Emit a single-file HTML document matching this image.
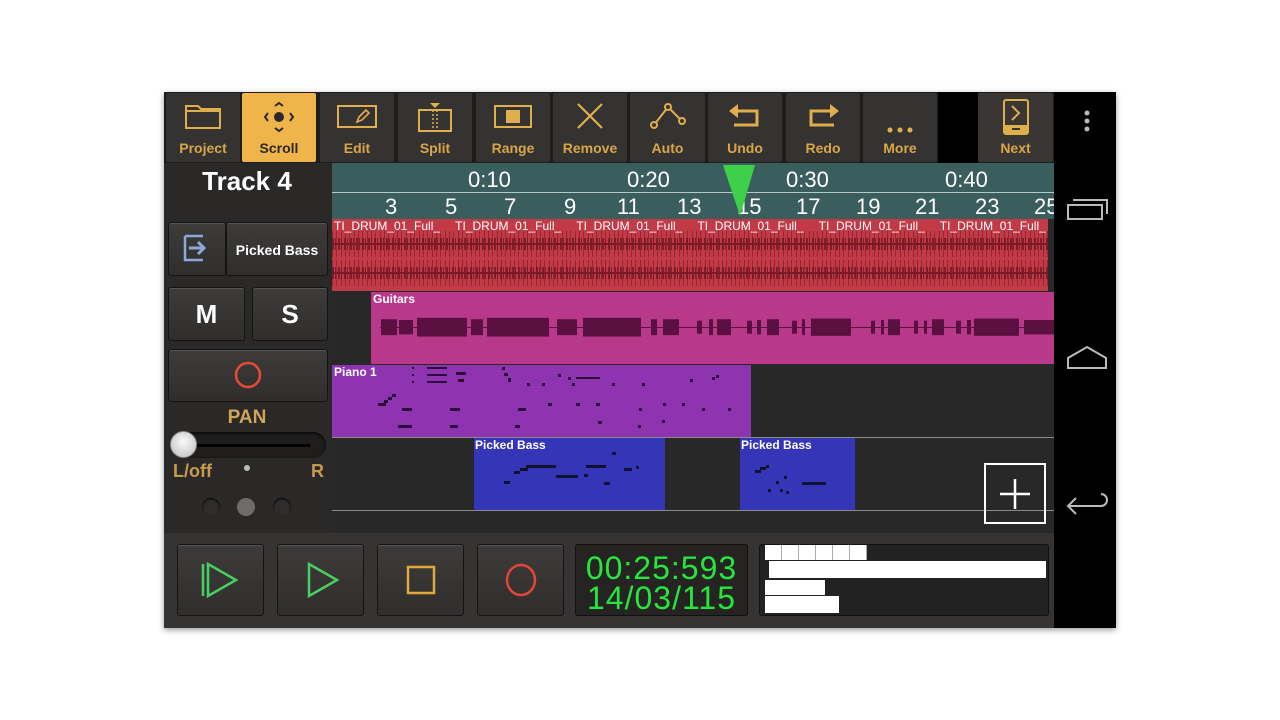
<!DOCTYPE html>
<html><head><meta charset="utf-8"><style>
*{margin:0;padding:0;box-sizing:border-box}
body{width:1280px;height:720px;background:#fff;position:relative;overflow:hidden;font-family:"Liberation Sans",sans-serif}
.a{position:absolute}
.tb{position:absolute;top:93px;height:69px;background:#353331;border-radius:2px;color:#d8a649;font-weight:bold;font-size:14px;text-align:center}
.tb span{position:absolute;left:0;right:0;bottom:6px}
.tb svg{position:absolute;left:50%;top:8px;transform:translateX(-50%)}
.btn{position:absolute;background:linear-gradient(#3e3c3a,#2f2e2c);border:1px solid #151414;border-radius:3px;box-shadow:inset 0 1px 0 #555}
.num{position:absolute;color:#fff;font-size:22px;top:194px}
.tm{position:absolute;color:#fff;font-size:22px;top:167px}
.lab{position:absolute;color:#fff;font-size:12px;font-weight:bold}
.wv{position:absolute;left:332px;width:716px;height:26px;background:repeating-linear-gradient(90deg,#6e1620 0 1px,transparent 1px 4px,#7a1a24 4px 5px,transparent 5px 9px,#6e1620 9px 10px,transparent 10px 13px);opacity:.55}
.wv2{position:absolute;left:332px;width:716px;height:12px;background:repeating-linear-gradient(90deg,#6e1620 0 2px,transparent 2px 3px,#6e1620 3px 4px,transparent 4px 6px);opacity:.8}
</style></head><body>
<div class="a" style="left:164px;top:92px;width:952px;height:536px;background:#1e1d1c;box-shadow:0 2px 6px rgba(0,0,0,.4)"></div>
<div class="a" style="left:1054px;top:92px;width:62px;height:536px;background:#000"></div>
<div class="a" style="left:938px;top:92px;width:40px;height:71px;background:#000"></div>
<div class="tb" style="left:166px;width:74px"><svg width="40" height="30"><path d="M3 5h12l3 3h19v19H3z" fill="none" stroke="#e0ae4d" stroke-width="2"/><path d="M3 10h34" stroke="#e0ae4d" stroke-width="2"/></svg><span>Project</span></div>
<div class="tb" style="left:242px;width:74px;background:#efb54a;color:#2b2a28"><svg width="40" height="32"><circle cx="20" cy="16" r="5" fill="#2b2a28"/><path d="M16 5l4-3 4 3M16 27l4 3 4-3M9 12l-3 4 3 4M31 12l3 4-3 4" fill="none" stroke="#2b2a28" stroke-width="2"/></svg><span>Scroll</span></div>
<div class="tb" style="left:320px;width:74px"><svg width="44" height="30"><rect x="3" y="5" width="38" height="21" fill="none" stroke="#e0ae4d" stroke-width="2"/><path d="M22 21l2-5 7-7 3 3-7 7z" fill="none" stroke="#e0ae4d" stroke-width="1.6"/></svg><span>Edit</span></div>
<div class="tb" style="left:398px;width:74px"><svg width="44" height="32"><path d="M17 2h10l-5 5z" fill="#e0ae4d"/><rect x="6" y="9" width="32" height="21" fill="none" stroke="#e0ae4d" stroke-width="2"/><path d="M20 9v21M24 9v21" stroke="#e0ae4d" stroke-width="1.5" stroke-dasharray="2 2"/></svg><span>Split</span></div>
<div class="tb" style="left:476px;width:74px"><svg width="44" height="30"><rect x="4" y="5" width="36" height="21" fill="none" stroke="#e0ae4d" stroke-width="2"/><rect x="15" y="9" width="14" height="13" fill="#e0ae4d"/></svg><span>Range</span></div>
<div class="tb" style="left:553px;width:74px"><svg width="40" height="30"><path d="M8 3l24 24M32 3L8 27" stroke="#e0ae4d" stroke-width="2.2"/></svg><span>Remove</span></div>
<div class="tb" style="left:630px;width:75px"><svg width="40" height="30"><path d="M6 24L20 6l14 14" fill="none" stroke="#e0ae4d" stroke-width="2"/><circle cx="6" cy="24" r="3" fill="#353331" stroke="#e0ae4d" stroke-width="2"/><circle cx="20" cy="6" r="3" fill="#353331" stroke="#e0ae4d" stroke-width="2"/><circle cx="34" cy="20" r="3" fill="#353331" stroke="#e0ae4d" stroke-width="2"/></svg><span>Auto</span></div>
<div class="tb" style="left:708px;width:74px"><svg width="40" height="30"><path d="M4 10l9-7v14z" fill="#e0ae4d"/><path d="M12 10h20v14H9" fill="none" stroke="#e0ae4d" stroke-width="3"/></svg><span>Undo</span></div>
<div class="tb" style="left:786px;width:74px"><svg width="40" height="30"><path d="M36 10l-9-7v14z" fill="#e0ae4d"/><path d="M28 10H8v14h23" fill="none" stroke="#e0ae4d" stroke-width="3"/></svg><span>Redo</span></div>
<div class="tb" style="left:863px;width:74px"><svg width="40" height="36"><circle cx="10" cy="29" r="2.5" fill="#e0ae4d"/><circle cx="20" cy="29" r="2.5" fill="#e0ae4d"/><circle cx="30" cy="29" r="2.5" fill="#e0ae4d"/></svg><span>More</span></div>
<div class="tb" style="left:978px;width:75px;background:#3a3633"><svg width="40" height="38" style="top:5px"><rect x="8" y="2" width="24" height="34" rx="2" fill="none" stroke="#e0ae4d" stroke-width="2"/><rect x="8" y="27" width="24" height="9" fill="#e0ae4d"/><path d="M16 8l7 7-7 7" fill="none" stroke="#e0ae4d" stroke-width="2"/><path d="M16 31h8" stroke="#353331" stroke-width="2"/></svg><span>Next</span></div>
<svg class="a" style="left:1054px;top:92px" width="62" height="536"><circle cx="33" cy="21" r="2.5" fill="#bbb"/><circle cx="33" cy="29" r="2.5" fill="#bbb"/><circle cx="33" cy="37" r="2.5" fill="#bbb"/><rect x="14" y="113" width="34" height="14" fill="none" stroke="#bbb" stroke-width="2"/><path d="M19 108h34v14" fill="none" stroke="#bbb" stroke-width="2"/><path d="M14 276v-10l19-11 19 11v10z" fill="none" stroke="#bbb" stroke-width="2"/><path d="M22 406l-8 8 8 8M14 414h33a6 6 0 0 0 0-12" fill="none" stroke="#bbb" stroke-width="2"/></svg>
<div class="a" style="left:164px;top:163px;width:168px;height:370px;background:#2a2928"></div>
<div class="a" style="left:164px;top:166px;width:166px;text-align:center;color:#fff;font-size:26px;font-weight:bold">Track 4</div>
<div class="btn" style="left:168px;top:222px;width:58px;height:54px"><svg width="56" height="52"><path d="M16 13v24h18M16 13h18" fill="none" stroke="#8da9d8" stroke-width="2.5"/><path d="M20 25h14M29 19l6 6-6 6" fill="none" stroke="#8da9d8" stroke-width="3"/></svg></div>
<div class="btn" style="left:226px;top:222px;width:102px;height:54px;color:#fff;font-weight:bold;font-size:14px;text-align:center;line-height:54px">Picked Bass</div>
<div class="btn" style="left:168px;top:287px;width:77px;height:54px;color:#fff;font-weight:bold;font-size:26px;text-align:center;line-height:52px">M</div>
<div class="btn" style="left:252px;top:287px;width:76px;height:54px;color:#fff;font-weight:bold;font-size:26px;text-align:center;line-height:52px">S</div>
<div class="btn" style="left:168px;top:349px;width:160px;height:53px"><svg width="158" height="51"><circle cx="79" cy="25" r="12" fill="none" stroke="#e84b34" stroke-width="2.5"/></svg></div>
<div class="a" style="left:164px;top:407px;width:166px;text-align:center;color:#d0a55a;font-size:19px;font-weight:bold">PAN</div>
<div class="a" style="left:170px;top:432px;width:156px;height:26px;border-radius:13px;background:#1f1e1d;box-shadow:inset 0 1px 3px #000"></div>
<div class="a" style="left:184px;top:444px;width:126px;height:3px;background:#000"></div>
<div class="a" style="left:170px;top:431px;width:27px;height:27px;border-radius:50%;background:radial-gradient(circle at 50% 40%,#fafafa,#bbb);border:1px solid #888"></div>
<div class="a" style="left:173px;top:461px;color:#c69a4f;font-size:18px;font-weight:bold">L/off</div>
<div class="a" style="left:311px;top:461px;color:#c69a4f;font-size:18px;font-weight:bold">R</div>
<div class="a" style="left:244px;top:465px;width:6px;height:6px;border-radius:50%;background:#bbb"></div>
<div class="a" style="left:202px;top:498px;width:18px;height:18px;border-radius:50%;background:#2e2d2c;box-shadow:inset 0 1px 2px #000"></div>
<div class="a" style="left:237px;top:498px;width:18px;height:18px;border-radius:50%;background:#6d6c6b"></div>
<div class="a" style="left:273px;top:498px;width:18px;height:18px;border-radius:50%;background:#2e2d2c;box-shadow:inset 0 1px 2px #000"></div>
<div class="a" style="left:332px;top:163px;width:722px;height:370px;background:#292828"></div>
<div class="a" style="left:332px;top:163px;width:722px;height:56px;background:#3a5e5d"></div>
<div class="a" style="left:332px;top:192px;width:722px;height:1px;background:#b8c8c8"></div>
<div class="tm" style="left:468px">0:10</div><div class="tm" style="left:627px">0:20</div><div class="tm" style="left:786px">0:30</div><div class="tm" style="left:945px">0:40</div>
<div class="num" style="left:385px">3</div><div class="num" style="left:445px">5</div><div class="num" style="left:504px">7</div><div class="num" style="left:564px">9</div><div class="num" style="left:617px">11</div><div class="num" style="left:677px">13</div><div class="num" style="left:737px">15</div><div class="num" style="left:796px">17</div><div class="num" style="left:856px">19</div><div class="num" style="left:915px">21</div><div class="num" style="left:975px">23</div><div class="num" style="left:1034px;width:20px;overflow:hidden">25</div>
<div class="a" style="left:332px;top:219px;width:716px;height:72px;background:#c23a48"></div>
<div class="wv" style="top:231px"></div><div class="wv2" style="top:238px"></div>
<div class="wv" style="top:260px"></div><div class="wv2" style="top:267px"></div>
<div class="a" style="left:332px;top:243px;width:716px;height:2px;background:#7a1a24"></div>
<div class="a" style="left:332px;top:272px;width:716px;height:2px;background:#7a1a24"></div>
<div class="a" style="left:334px;top:219px;width:714px;overflow:hidden;color:#fff;font-size:12px;white-space:nowrap;word-spacing:12px">TI_DRUM_01_Full_ TI_DRUM_01_Full_ TI_DRUM_01_Full_ TI_DRUM_01_Full_ TI_DRUM_01_Full_ TI_DRUM_01_Full_</div>
<div class="a" style="left:371px;top:292px;width:683px;height:72px;background:#b8388a"></div>
<div class="a" style="left:380px;top:327px;width:674px;height:1px;background:#5a1040"></div>
<svg class="a" style="left:371px;top:292px" width="683" height="72"><g fill="#5a1040" transform="translate(0,10) scale(1,0.72)">
<rect x="10" y="24" width="16" height="22"/><rect x="28" y="25" width="14" height="20"/><rect x="46" y="22" width="50" height="26"/><rect x="100" y="24" width="12" height="22"/><rect x="116" y="22" width="62" height="26"/><rect x="186" y="24" width="20" height="22"/><rect x="212" y="22" width="58" height="26"/><rect x="280" y="24" width="6" height="22"/><rect x="292" y="24" width="16" height="22"/><rect x="326" y="26" width="5" height="18"/><rect x="338" y="24" width="4" height="22"/><rect x="346" y="24" width="14" height="22"/><rect x="376" y="26" width="5" height="18"/><rect x="386" y="25" width="4" height="20"/><rect x="396" y="24" width="12" height="22"/><rect x="421" y="26" width="5" height="18"/><rect x="431" y="24" width="3" height="22"/><rect x="440" y="23" width="40" height="24"/><rect x="500" y="26" width="4" height="18"/><rect x="510" y="25" width="3" height="20"/><rect x="517" y="24" width="12" height="22"/><rect x="543" y="26" width="4" height="18"/><rect x="553" y="26" width="3" height="18"/><rect x="561" y="24" width="12" height="22"/><rect x="585" y="26" width="5" height="18"/><rect x="596" y="25" width="4" height="20"/><rect x="603" y="23" width="45" height="24"/><rect x="653" y="25" width="30" height="20"/></g></svg>
<div class="lab" style="left:373px;top:292px">Guitars</div>
<div class="a" style="left:332px;top:365px;width:419px;height:72px;background:#8e34b0"></div>
<svg class="a" style="left:332px;top:365px" width="419" height="72"><g fill="#2a0b3a">
<rect x="46" y="38" width="8" height="3"/><rect x="52" y="35" width="4" height="3"/><rect x="56" y="32" width="4" height="3"/><rect x="60" y="29" width="4" height="3"/><rect x="70" y="43" width="10" height="3"/><rect x="118" y="43" width="10" height="3"/><rect x="66" y="60" width="14" height="3"/><rect x="118" y="60" width="8" height="3"/><rect x="186" y="43" width="8" height="3"/><rect x="183" y="60" width="5" height="3"/><rect x="216" y="38" width="4" height="3"/><rect x="244" y="38" width="4" height="3"/><rect x="264" y="38" width="4" height="3"/><rect x="266" y="56" width="4" height="3"/><rect x="307" y="43" width="3" height="3"/><rect x="331" y="38" width="3" height="3"/><rect x="306" y="60" width="3" height="3"/><rect x="330" y="55" width="3" height="3"/><rect x="350" y="38" width="3" height="3"/><rect x="370" y="43" width="3" height="3"/><rect x="396" y="43" width="3" height="3"/><rect x="80" y="2" width="2" height="2"/><rect x="95" y="2" width="20" height="2"/><rect x="80" y="9" width="2" height="2"/><rect x="95" y="9" width="20" height="2"/><rect x="80" y="16" width="2" height="2"/><rect x="95" y="16" width="20" height="2"/><rect x="124" y="7" width="10" height="3"/><rect x="126" y="14" width="6" height="3"/><rect x="170" y="2" width="3" height="3"/><rect x="172" y="8" width="4" height="3"/><rect x="176" y="13" width="3" height="4"/><rect x="244" y="12" width="24" height="2"/><rect x="226" y="9" width="3" height="3"/><rect x="236" y="12" width="3" height="3"/><rect x="240" y="18" width="3" height="3"/><rect x="210" y="18" width="3" height="3"/><rect x="195" y="18" width="3" height="3"/><rect x="280" y="18" width="3" height="3"/><rect x="310" y="18" width="3" height="3"/><rect x="358" y="14" width="3" height="3"/><rect x="380" y="12" width="3" height="3"/><rect x="384" y="10" width="3" height="3"/></g></svg>
<div class="lab" style="left:334px;top:365px">Piano 1</div>
<div class="a" style="left:332px;top:437px;width:722px;height:1px;background:#8a8a8a"></div>
<div class="a" style="left:474px;top:438px;width:191px;height:72px;background:#3535b8"></div>
<div class="a" style="left:740px;top:438px;width:115px;height:72px;background:#3535b8"></div>
<svg class="a" style="left:474px;top:438px" width="191" height="72"><g fill="#111130"><rect x="52" y="27" width="30" height="3"/><rect x="46" y="30" width="8" height="3"/><rect x="40" y="33" width="6" height="3"/><rect x="30" y="43" width="6" height="3"/><rect x="82" y="37" width="22" height="3"/><rect x="112" y="27" width="20" height="3"/><rect x="138" y="14" width="4" height="3"/><rect x="130" y="44" width="6" height="3"/><rect x="110" y="36" width="4" height="3"/><rect x="162" y="28" width="3" height="3"/><rect x="150" y="30" width="8" height="3"/></g></svg>
<svg class="a" style="left:740px;top:438px" width="115" height="72"><g fill="#111130"><rect x="15" y="32" width="6" height="3"/><rect x="20" y="29" width="6" height="3"/><rect x="26" y="27" width="3" height="3"/><rect x="62" y="44" width="24" height="3"/><rect x="44" y="38" width="3" height="3"/><rect x="36" y="43" width="3" height="3"/><rect x="28" y="51" width="3" height="3"/><rect x="46" y="53" width="3" height="3"/><rect x="40" y="51" width="3" height="3"/></g></svg>
<div class="lab" style="left:475px;top:438px">Picked Bass</div>
<div class="lab" style="left:741px;top:438px">Picked Bass</div>
<div class="a" style="left:332px;top:510px;width:722px;height:1px;background:#8a8a8a"></div>
<div class="a" style="left:984px;top:463px;width:62px;height:61px;border:2px solid #fff"><svg width="58" height="57"><path d="M29 14v30M14 29h30" stroke="#fff" stroke-width="2.5"/></svg></div>
<svg class="a" style="left:720px;top:163px" width="40" height="56"><path d="M3 2h32L20 53z" fill="#3ed04a"/></svg>
<div class="a" style="left:164px;top:533px;width:890px;height:95px;background:#353433"></div>
<div class="btn" style="left:177px;top:544px;width:87px;height:72px"><svg width="85" height="70"><path d="M25 19v32M30 19v32l28-16z" fill="none" stroke="#48cf62" stroke-width="2.5"/></svg></div>
<div class="btn" style="left:277px;top:544px;width:87px;height:72px"><svg width="85" height="70"><path d="M31 19v32l28-16z" fill="none" stroke="#48cf62" stroke-width="2.5"/></svg></div>
<div class="btn" style="left:377px;top:544px;width:87px;height:72px"><svg width="85" height="70"><rect x="30" y="22" width="26" height="26" fill="none" stroke="#e3a83b" stroke-width="2.5"/></svg></div>
<div class="btn" style="left:477px;top:544px;width:87px;height:72px"><svg width="85" height="70"><ellipse cx="43" cy="35" rx="14" ry="15" fill="none" stroke="#e44634" stroke-width="2.5"/></svg></div>
<div class="a" style="left:575px;top:544px;width:173px;height:72px;background:#252423;border:1px solid #111;border-radius:3px;color:#26e63c;font-size:32px;line-height:30px;text-align:center;padding-top:8px;letter-spacing:1px">00:25:593<br>14/03/115</div>
<div class="a" style="left:759px;top:544px;width:290px;height:72px;background:#232222;border:1px solid #111;border-radius:3px"></div>
<div class="a" style="left:765px;top:545px;width:102px;height:15px;background:repeating-linear-gradient(90deg,#fff 0 16px,#aaa 16px 17px)"></div>
<div class="a" style="left:769px;top:561px;width:277px;height:17px;background:#fff"></div>
<div class="a" style="left:765px;top:580px;width:60px;height:15px;background:#fff"></div>
<div class="a" style="left:765px;top:596px;width:74px;height:17px;background:#fff"></div>
</body></html>
